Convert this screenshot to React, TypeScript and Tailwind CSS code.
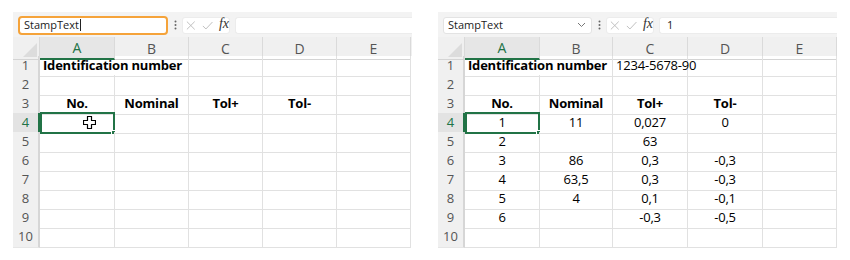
import React from "react";

const font = { fontFamily: '"Open Sans", "Noto Sans", sans-serif' };

type Cell = { t?: string; b?: boolean; align?: "c" | "l" };

const colsLeft = "grid-cols-[27px_75px_74px_74px_74px_74px]";
const colsRight = "grid-cols-[27px_75px_73px_75px_75px_74px]";

function XIcon() {
  return (
    <svg width="11" height="11" viewBox="0 0 11 11" fill="none" stroke="#bdbdbd" strokeWidth="1.1">
      <path d="M1 1 L10 10 M10 1 L1 10" />
    </svg>
  );
}
function CheckIcon() {
  return (
    <svg width="13" height="11" viewBox="0 0 13 11" fill="none" stroke="#bdbdbd" strokeWidth="1.1">
      <path d="M1 6 L4.5 9.5 L12 1.5" />
    </svg>
  );
}

function FormulaBar({ left }: { left: boolean }) {
  return (
    <div className="flex items-center h-[25px] bg-[#f3f3f3] pl-[5px] pt-[1px]">
      <div
        className={
          left
            ? "flex items-center w-[150px] h-[19px] rounded-[4px] border-2 border-[#f5a33a] bg-white pl-[4px] text-[11px] text-[#222]"
            : "flex items-center w-[149px] h-[17px] rounded-[3px] border border-[#e3e3e3] bg-white pl-[4px] pr-[5px] text-[11px] text-[#222]"
        }
      >
        <span>StampText</span>
        {left ? <span className="w-[1px] h-[12px] bg-[#222] ml-[1px]" /> : null}
        {!left ? (
          <svg className="ml-auto" width="9" height="6" viewBox="0 0 9 6" fill="none" stroke="#777" strokeWidth="1">
            <path d="M1 1 L4.5 4.5 L8 1" />
          </svg>
        ) : null}
      </div>
      <div className="w-[14px] flex justify-center">
        <svg width="3" height="10" viewBox="0 0 3 10" fill="#666">
          <circle cx="1.5" cy="1.5" r="1" />
          <circle cx="1.5" cy="5" r="1" />
          <circle cx="1.5" cy="8.5" r="1" />
        </svg>
      </div>
      <div className="flex items-center gap-[6px] w-[48px] h-[17px] rounded-[3px] bg-white border border-[#ececec] pl-[3px] mr-[5px]">
        <XIcon />
        <CheckIcon />
        <span
          className="italic text-[14px] text-[#333] leading-none -mt-[2px]"
          style={{ fontFamily: '"Liberation Serif", serif' }}
        >
          fx
        </span>
      </div>
      <div className="flex-1 h-[17px] rounded-l-[3px] bg-white border border-[#ececec] border-r-0 pl-[7px] flex items-center text-[11px] text-[#222]">
        {left ? "" : "1"}
      </div>
    </div>
  );
}

function Sheet({ left, data }: { left: boolean; data: Cell[][] }) {
  const cols = left ? colsLeft : colsRight;
  const letters = ["A", "B", "C", "D", "E"];
  return (
    <div className="w-full" style={font}>
      <FormulaBar left={left} />
      <div className={`grid ${cols} h-[19px] bg-[#f0f0f0]`}>
        <div className="relative border-r border-[#dadada] border-b border-b-[#d4d4d4]">
          <svg className="absolute right-[2px] bottom-[2px]" width="14" height="14" viewBox="0 0 14 14">
            <path d="M14 0 L14 14 L0 14 Z" fill="#dcdcdc" />
          </svg>
        </div>
        {letters.map((l, i) => (
          <div
            key={l}
            className={
              i === 0
                ? "flex items-center justify-center text-[14px] text-[#217346] bg-[#e6e6e6] border-b-2 border-[#217346] border-r border-r-[#dadada]"
                : "flex items-center justify-center text-[14px] text-[#555] border-r border-[#dadada] border-b border-b-[#d4d4d4]"
            }
          >
            {l}
          </div>
        ))}
      </div>
      {data.map((row, r) => (
        <div key={r} className={`grid ${cols} h-[19px]`}>
          <div
            className={
              r === 3
                ? "flex items-center justify-center text-[13px] text-[#217346] bg-[#e3e3e3] border-r-2 border-[#217346] border-b border-b-[#dadada]"
                : "flex items-center justify-center text-[13px] text-[#555] bg-[#f0f0f0] border-r-2 border-[#d6d6d6] border-b border-b-[#e6e6e6]"
            }
          >
            {r + 1}
          </div>
          {row.map((c, ci) => {
            const sel = r === 3 && ci === 0;
            const noRight = r === 0 && ci === 0;
            return (
              <div
                key={ci}
                className={
                  "relative flex items-center text-[13px] tracking-[-0.2px] text-black border-b border-[#e1e1e1] whitespace-nowrap " +
                  (noRight ? "" : "border-r ") +
                  (c.align === "l" ? "justify-start pl-[3px] " : "justify-center ") +
                  (c.b ? "font-bold " : "")
                }
              >
                {c.t ? <span className="relative">{c.t}</span> : null}
                {sel ? (
                  <div className="absolute left-0 top-[-1px] right-[-1px] bottom-[-1px] border-2 border-[#217346]">
                    <div className="absolute right-[-3px] bottom-[-3px] w-[5px] h-[5px] bg-[#217346] border border-white" />
                  </div>
                ) : null}
                {sel && left ? (
                  <svg className="absolute left-[43px] top-[3px]" width="13" height="13" viewBox="0 0 13 13">
                    <path
                      d="M4.5 0.5 H8.5 V4.5 H12.5 V8.5 H8.5 V12.5 H4.5 V8.5 H0.5 V4.5 H4.5 Z"
                      fill="white"
                      stroke="black"
                      strokeWidth="1.2"
                      strokeLinejoin="round"
                    />
                  </svg>
                ) : null}
              </div>
            );
          })}
        </div>
      ))}
    </div>
  );
}

const empty = (): Cell => ({});

const leftData: Cell[][] = [
  [{ t: "Identification number", b: true, align: "l" }, empty(), empty(), empty(), empty()],
  [empty(), empty(), empty(), empty(), empty()],
  [{ t: "No.", b: true }, { t: "Nominal", b: true }, { t: "Tol+", b: true }, { t: "Tol-", b: true }, empty()],
  ...Array.from({ length: 7 }, () => [empty(), empty(), empty(), empty(), empty()]),
];

const rightData: Cell[][] = [
  [{ t: "Identification number", b: true, align: "l" }, empty(), { t: "1234-5678-90", align: "l" }, empty(), empty()],
  [empty(), empty(), empty(), empty(), empty()],
  [{ t: "No.", b: true }, { t: "Nominal", b: true }, { t: "Tol+", b: true }, { t: "Tol-", b: true }, empty()],
  [{ t: "1" }, { t: "11" }, { t: "0,027" }, { t: "0" }, empty()],
  [{ t: "2" }, empty(), { t: "63" }, empty(), empty()],
  [{ t: "3" }, { t: "86" }, { t: "0,3" }, { t: "-0,3" }, empty()],
  [{ t: "4" }, { t: "63,5" }, { t: "0,3" }, { t: "-0,3" }, empty()],
  [{ t: "5" }, { t: "4" }, { t: "0,1" }, { t: "-0,1" }, empty()],
  [{ t: "6" }, empty(), { t: "-0,3" }, { t: "-0,5" }, empty()],
  [empty(), empty(), empty(), empty(), empty()],
];

export default function App() {
  return (
    <div className="w-[850px] h-[260px] bg-white flex pt-[12px]">
      <div className="ml-[13px] w-[399px]">
        <Sheet left={true} data={leftData} />
      </div>
      <div className="ml-[26px] w-[399px]">
        <Sheet left={false} data={rightData} />
      </div>
    </div>
  );
}
